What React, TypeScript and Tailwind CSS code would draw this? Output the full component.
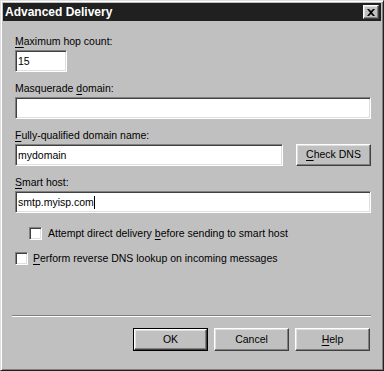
import React from 'react';

const sunken =
    'bg-white border border-t-[#808080] border-l-[#808080] border-b-white border-r-white shadow-[inset_1px_1px_0_#404040,inset_-1px_-1px_0_#dfdfdf]';
const raised =
    'bg-[#c0c0c0] border border-t-white border-l-white border-b-[#404040] border-r-[#404040] shadow-[inset_-1px_-1px_0_#808080,inset_1px_1px_0_#dfdfdf]';

const U: React.FC<{ children: React.ReactNode }> = ({ children }) => (
    <span className="underline underline-offset-[2px]">{children}</span>
);

const Field: React.FC<{ label: React.ReactNode; children: React.ReactNode }> = ({ label, children }) => (
    <div className="flex flex-col mb-[10px]">
        <div className="h-[13px] leading-[13px] mb-[2px]">{label}</div>
        {children}
    </div>
);

const TextBox: React.FC<{ value?: string; className?: string; caret?: boolean }> = ({ value, className, caret }) => (
    <div className={`${sunken} h-[22px] flex items-center pl-[2px] ${className ?? ''}`}>
        <span className="leading-[13px]">{value}</span>
        {caret && <span className="w-[1px] h-[13px] bg-black" />}
    </div>
);

const CheckBox: React.FC = () => <div className={`${sunken} w-[13px] h-[13px] shrink-0`} />;

const Button: React.FC<{ children: React.ReactNode; primary?: boolean }> = ({ children, primary }) =>
    primary ? (
        <div className="w-[75px] h-[23px] border border-black">
            <div className={`${raised} w-full h-full flex items-center justify-center`}>{children}</div>
        </div>
    ) : (
        <div className={`${raised} w-[75px] h-[23px] flex items-center justify-center`}>{children}</div>
    );

const App: React.FC = () => (
    <div
        className="w-[384px] h-[371px] bg-[#c0c0c0] text-black text-[10.5px] flex flex-col border border-t-[#dfdfdf] border-l-[#dfdfdf] border-b-[#202020] border-r-[#202020] shadow-[inset_1px_1px_0_#ffffff,inset_-1px_-1px_0_#808080] p-[2px]"
        style={{ fontFamily: '"Liberation Sans", Arial, sans-serif' }}
    >
        {/* title bar */}
        <div className="h-[18px] bg-[#202020] flex items-center justify-between pl-[2px] pr-[2px]">
            <span className="text-white font-bold text-[12px] leading-[18px]">Advanced Delivery</span>
            <div className={`${raised} w-[16px] h-[14px] flex items-center justify-center`}>
                <svg width="8" height="7" viewBox="0 0 8 7">
                    <path d="M0 0h2l2 2 2-2h2L5 3.5 8 7H6L4 5 2 7H0l3-3.5z" fill="#000" />
                </svg>
            </div>
        </div>

        {/* body */}
        <div className="flex-1 flex flex-col pt-[14px] pl-[12px] pr-[10px] pb-[17px]">
            <Field label={<><U>M</U>aximum hop count:</>}>
                <TextBox value="15" className="w-[52px]" />
            </Field>
            <Field label={<>Masquerade <U>d</U>omain:</>}>
                <TextBox />
            </Field>
            <Field label={<><U>F</U>ully-qualified domain name:</>}>
                <div className="flex gap-[13px]">
                    <TextBox value="mydomain" className="flex-1" />
                    <div className={`${raised} w-[75px] h-[22px] flex items-center justify-center`}>
                        <span><U>C</U>heck DNS</span>
                    </div>
                </div>
            </Field>
            <Field label={<><U>S</U>mart host:</>}>
                <TextBox value="smtp.myisp.com" caret />
            </Field>

            <div className="flex items-center gap-[6px] pl-[14px] mt-[4px] h-[13px]">
                <CheckBox />
                <span>Attempt direct delivery <U>b</U>efore sending to smart host</span>
            </div>
            <div className="flex items-center gap-[5px] mt-[12px] h-[13px]">
                <CheckBox />
                <span><U>P</U>erform reverse DNS lookup on incoming messages</span>
            </div>

            <div className="flex-1" />
            <div className="h-[2px] border-t border-t-[#808080] border-b border-b-white -ml-[3px]" />

            <div className="flex justify-end gap-[6px] mt-[11px] pr-[1px]">
                <Button primary>OK</Button>
                <Button>Cancel</Button>
                <Button><U>H</U>elp</Button>
            </div>
        </div>
    </div>
);

export default App;
